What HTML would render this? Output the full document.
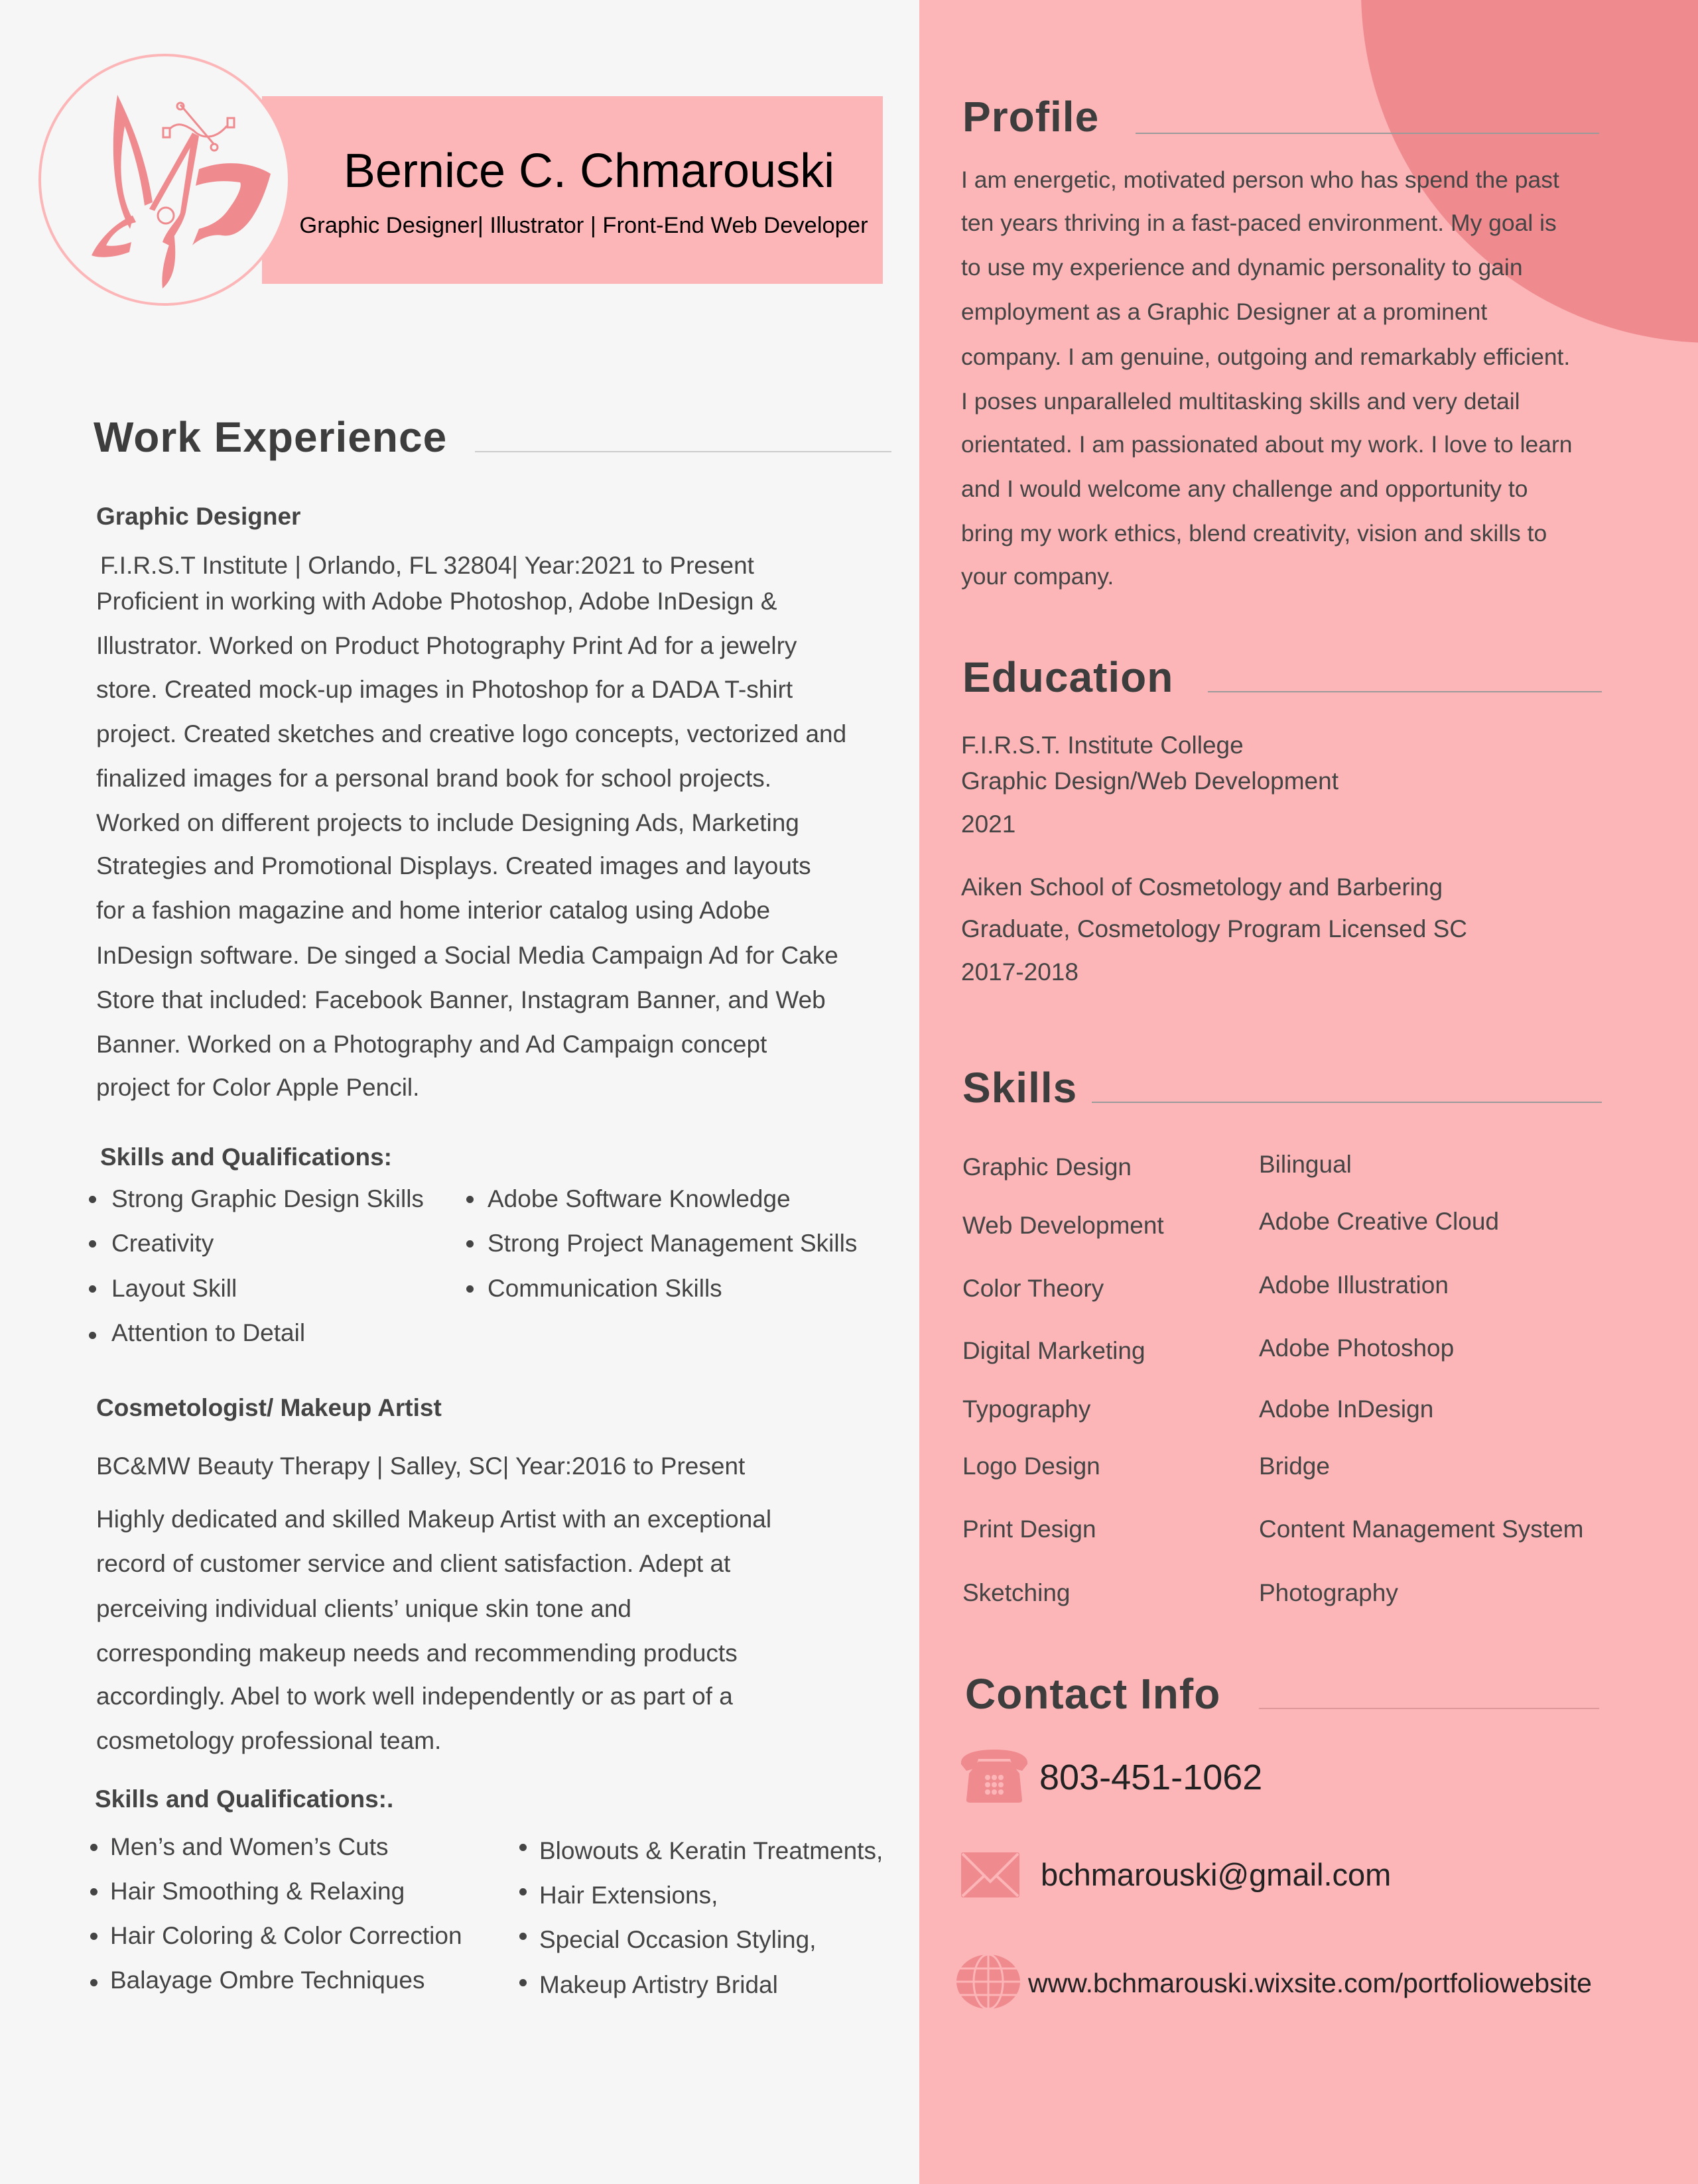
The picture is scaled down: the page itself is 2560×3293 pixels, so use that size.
<!DOCTYPE html>
<html><head><meta charset="utf-8"><style>
*{margin:0;padding:0;box-sizing:border-box}
body{width:2560px;height:3293px;position:relative;overflow:hidden;background:#f5f6f5;font-family:"Liberation Sans",sans-serif;color:#444}
.a{position:absolute;white-space:nowrap;line-height:60px;font-size:37px}
.p{font-size:35.5px}
.b{font-weight:bold}
.h{position:absolute;white-space:nowrap;font-weight:bold;font-size:64px;line-height:80px;color:#3d3d3d;letter-spacing:1px}
.ln{position:absolute;height:2px;background:#9a9a9a}
.dot{position:absolute;width:11px;height:11px;border-radius:50%;background:#444}
</style></head><body>
<div style="position:absolute;left:1386px;top:0;width:1174px;height:3293px;background:#fdb6b8"></div>
<div style="position:absolute;left:2052px;top:-545px;width:1062px;height:1062px;border-radius:50%;background:#ef8a8f"></div>

<div style="position:absolute;left:395px;top:145px;width:936px;height:283px;background:#fdb6b8"></div>
<div style="position:absolute;left:58px;top:81px;width:380px;height:380px;border-radius:50%;background:#f5f6f5;border:4px solid #fdb6b8"></div>
<svg style="position:absolute;left:0;top:0" width="460" height="460" viewBox="0 0 460 460">
<g fill="#ef8a8f">
<path d="M177 143 C200 190 220 240 230 305 L218 310 C210 250 195 210 188 190 C180 240 178 290 200 330 L196 345 C170 300 165 220 177 143Z"/>
<path d="M300 255 C340 240 380 245 408 262 C395 310 370 360 335 355 C320 352 300 360 290 370 L300 345 C320 340 335 330 345 315 C360 295 365 280 362 275 C340 272 320 272 295 280Z"/>
<path d="M200 325 C175 335 150 360 138 385 C150 390 175 388 195 380 L198 365 C185 370 170 372 160 370 C170 350 185 340 205 335Z"/>
<path d="M262 350 C250 380 242 410 245 435 C262 420 268 395 262 350Z M256 380 L252 420 C262 405 262 395 256 380Z"/>
<path d="M290 200 L300 205 L280 320 C275 340 262 355 255 370 L245 365 C252 345 270 330 272 320 Z"/>
<path d="M290 200 L225 315 L233 318 L295 208Z"/>
</g>
<g fill="none" stroke="#ef8a8f" stroke-width="3">
<circle cx="250" cy="325" r="12"/>
<path d="M272 158 L323 218"/><circle cx="272" cy="160" r="5"/><circle cx="323" cy="222" r="5"/>
<path d="M255 195 C265 185 275 185 292 197 C305 210 325 210 342 190"/>
<rect x="246" y="193" width="10" height="14"/><rect x="343" y="178" width="10" height="14"/>
</g>
</svg>
<div class="a" style="left:888px;top:218px;line-height:80px;font-size:72px;color:#000;transform:translateX(-50%)">Bernice C. Chmarouski</div>
<div class="a" style="left:880px;top:315px;line-height:50px;font-size:34.5px;color:#000;transform:translateX(-50%)">Graphic Designer| Illustrator | Front-End Web Developer</div>

<div class="h" style="left:141px;top:619px">Work Experience</div>
<div class="ln" style="left:716px;top:680px;width:628px;background:#ccc"></div>
<div class="a b" style="left:145px;top:749px">Graphic Designer</div>
<div class="a" style="left:151px;top:823px">F.I.R.S.T Institute | Orlando, FL 32804| Year:2021 to Present</div>
<div class="a" style="left:145px;top:877px">Proficient in working with Adobe Photoshop, Adobe InDesign &amp;</div>
<div class="a" style="left:145px;top:944px">Illustrator. Worked on Product Photography Print Ad for a jewelry</div>
<div class="a" style="left:145px;top:1010px">store. Created mock-up images in Photoshop for a DADA T-shirt</div>
<div class="a" style="left:145px;top:1077px">project. Created sketches and creative logo concepts, vectorized and</div>
<div class="a" style="left:145px;top:1144px">finalized images for a personal brand book for school projects.</div>
<div class="a" style="left:145px;top:1211px">Worked on different projects to include Designing Ads, Marketing</div>
<div class="a" style="left:145px;top:1276px">Strategies and  Promotional Displays.  Created images and layouts</div>
<div class="a" style="left:145px;top:1343px">for a fashion magazine and home interior catalog using Adobe</div>
<div class="a" style="left:145px;top:1411px">InDesign software. De singed a Social Media Campaign Ad for Cake</div>
<div class="a" style="left:145px;top:1478px">Store that included: Facebook Banner, Instagram Banner, and Web</div>
<div class="a" style="left:145px;top:1545px">Banner. Worked on a  Photography and Ad Campaign  concept</div>
<div class="a" style="left:145px;top:1610px">project for Color Apple Pencil.</div>
<div class="a b" style="left:151px;top:1715px">Skills and Qualifications:</div>
<div class="dot" style="left:134px;top:1803px"></div><div class="a" style="left:168px;top:1778px">Strong Graphic Design Skills</div>
<div class="dot" style="left:134px;top:1870px"></div><div class="a" style="left:168px;top:1845px">Creativity</div>
<div class="dot" style="left:134px;top:1938px"></div><div class="a" style="left:168px;top:1913px">Layout Skill</div>
<div class="dot" style="left:134px;top:2008px"></div><div class="a" style="left:168px;top:1980px">Attention to Detail</div>
<div class="dot" style="left:703px;top:1803px"></div><div class="a" style="left:735px;top:1778px">Adobe Software Knowledge</div>
<div class="dot" style="left:703px;top:1870px"></div><div class="a" style="left:735px;top:1845px">Strong Project Management Skills</div>
<div class="dot" style="left:703px;top:1938px"></div><div class="a" style="left:735px;top:1913px">Communication Skills</div>

<div class="a b" style="left:145px;top:2093px">Cosmetologist/ Makeup Artist</div>
<div class="a" style="left:145px;top:2181px">BC&amp;MW Beauty Therapy | Salley, SC| Year:2016 to Present</div>
<div class="a" style="left:145px;top:2261px">Highly dedicated and skilled Makeup Artist with an exceptional</div>
<div class="a" style="left:145px;top:2328px">record of customer service and client satisfaction. Adept at</div>
<div class="a" style="left:145px;top:2396px">perceiving individual clients’ unique skin tone and</div>
<div class="a" style="left:145px;top:2463px">corresponding makeup needs and recommending products</div>
<div class="a" style="left:145px;top:2528px">accordingly. Abel to work well independently or as part of a</div>
<div class="a" style="left:145px;top:2595px">cosmetology professional team.</div>
<div class="a b" style="left:143px;top:2683px">Skills and Qualifications:.</div>
<div class="dot" style="left:136px;top:2780px"></div><div class="a" style="left:166px;top:2755px">Men’s and Women’s Cuts</div>
<div class="dot" style="left:136px;top:2847px"></div><div class="a" style="left:166px;top:2822px">Hair Smoothing &amp; Relaxing</div>
<div class="dot" style="left:136px;top:2914px"></div><div class="a" style="left:166px;top:2889px">Hair Coloring &amp; Color Correction</div>
<div class="dot" style="left:136px;top:2984px"></div><div class="a" style="left:166px;top:2956px">Balayage Ombre Techniques</div>
<div class="dot" style="left:783px;top:2780px"></div><div class="a" style="left:813px;top:2761px">Blowouts &amp; Keratin Treatments,</div>
<div class="dot" style="left:783px;top:2847px"></div><div class="a" style="left:813px;top:2828px">Hair Extensions,</div>
<div class="dot" style="left:783px;top:2914px"></div><div class="a" style="left:813px;top:2895px">Special Occasion Styling,</div>
<div class="dot" style="left:783px;top:2984px"></div><div class="a" style="left:813px;top:2963px">Makeup Artistry Bridal</div>

<div class="h" style="left:1451px;top:136px">Profile</div>
<div class="ln" style="left:1712px;top:200px;width:699px"></div>
<div class="a p" style="left:1449px;top:241px">I am energetic, motivated person who has spend the past</div>
<div class="a p" style="left:1449px;top:306px">ten years thriving in a fast-paced  environment. My goal is</div>
<div class="a p" style="left:1449px;top:373px">to use my experience and dynamic personality to gain</div>
<div class="a p" style="left:1449px;top:440px">employment as a Graphic Designer at a prominent</div>
<div class="a p" style="left:1449px;top:508px">company. I am genuine, outgoing and remarkably efficient.</div>
<div class="a p" style="left:1449px;top:575px">I poses unparalleled multitasking skills and very detail</div>
<div class="a p" style="left:1449px;top:640px">orientated. I am passionated about my work. I love to learn</div>
<div class="a p" style="left:1449px;top:707px">and I would welcome any challenge and opportunity to</div>
<div class="a p" style="left:1449px;top:774px">bring my work ethics, blend creativity, vision and skills to</div>
<div class="a p" style="left:1449px;top:839px">your company.</div>

<div class="h" style="left:1451px;top:981px">Education</div>
<div class="ln" style="left:1821px;top:1042px;width:594px"></div>
<div class="a" style="left:1449px;top:1094px">F.I.R.S.T. Institute College</div>
<div class="a" style="left:1449px;top:1148px">Graphic Design/Web Development</div>
<div class="a" style="left:1449px;top:1213px">2021</div>
<div class="a" style="left:1449px;top:1308px">Aiken School of Cosmetology and Barbering</div>
<div class="a" style="left:1449px;top:1371px">Graduate, Cosmetology Program Licensed SC</div>
<div class="a" style="left:1449px;top:1436px">2017-2018</div>

<div class="h" style="left:1451px;top:1600px">Skills</div>
<div class="ln" style="left:1646px;top:1661px;width:769px"></div>
<div class="a" style="left:1451px;top:1730px">Graphic Design</div>
<div class="a" style="left:1451px;top:1818px">Web Development</div>
<div class="a" style="left:1451px;top:1913px">Color Theory</div>
<div class="a" style="left:1451px;top:2007px">Digital Marketing</div>
<div class="a" style="left:1451px;top:2095px">Typography</div>
<div class="a" style="left:1451px;top:2181px">Logo Design</div>
<div class="a" style="left:1451px;top:2276px">Print Design</div>
<div class="a" style="left:1451px;top:2372px">Sketching</div>
<div class="a" style="left:1898px;top:1726px">Bilingual</div>
<div class="a" style="left:1898px;top:1812px">Adobe Creative Cloud</div>
<div class="a" style="left:1898px;top:1908px">Adobe Illustration</div>
<div class="a" style="left:1898px;top:2003px">Adobe Photoshop</div>
<div class="a" style="left:1898px;top:2095px">Adobe InDesign</div>
<div class="a" style="left:1898px;top:2181px">Bridge</div>
<div class="a" style="left:1898px;top:2276px">Content Management System</div>
<div class="a" style="left:1898px;top:2372px">Photography</div>

<div class="h" style="left:1455px;top:2514px">Contact Info</div>
<div class="ln" style="left:1898px;top:2575px;width:513px;background:#d99"></div>

<svg style="position:absolute;left:1447px;top:2638px" width="104" height="80" viewBox="0 0 104 80">
<g fill="#ef8a8f"><path d="M2 22 C0 8 20 0 52 0 C84 0 104 8 102 22 L94 32 L80 28 L76 14 L28 14 L24 28 L10 32Z"/><path d="M28 18 L76 18 L90 36 L94 76 C94 79 92 80 88 80 L16 80 C12 80 10 79 10 76 L14 36Z"/></g>
<g fill="#fdb6b8"><circle cx="42" cy="42" r="4"/><circle cx="52" cy="42" r="4"/><circle cx="62" cy="42" r="4"/><circle cx="42" cy="53" r="4"/><circle cx="52" cy="53" r="4"/><circle cx="62" cy="53" r="4"/><circle cx="42" cy="64" r="4"/><circle cx="52" cy="64" r="4"/><circle cx="62" cy="64" r="4"/></g>
</svg>
<div class="a" style="left:1567px;top:2650px;font-size:54px;color:#222">803-451-1062</div>

<svg style="position:absolute;left:1449px;top:2793px" width="88" height="68" viewBox="0 0 88 68">
<rect width="88" height="68" rx="3" fill="#ef8a8f"/>
<path d="M2 2 L44 44 L86 2 M2 66 L34 36 M86 66 L54 36" stroke="#fdb6b8" stroke-width="4" fill="none"/>
</svg>
<div class="a" style="left:1569px;top:2797px;font-size:47px;color:#222">bchmarouski@gmail.com</div>

<svg style="position:absolute;left:1441px;top:2946px" width="98" height="84" viewBox="0 0 98 84">
<ellipse cx="49" cy="42" rx="48" ry="41" fill="#ef8a8f"/>
<g stroke="#fdb6b8" stroke-width="3" fill="none"><path d="M1 42 H97 M6 22 H92 M6 62 H92 M49 1 V83"/><ellipse cx="49" cy="42" rx="22" ry="41"/></g>
</svg>
<div class="a" style="left:1550px;top:2960px;font-size:41px;color:#222">www.bchmarouski.wixsite.com/portfoliowebsite</div>
</body></html>
